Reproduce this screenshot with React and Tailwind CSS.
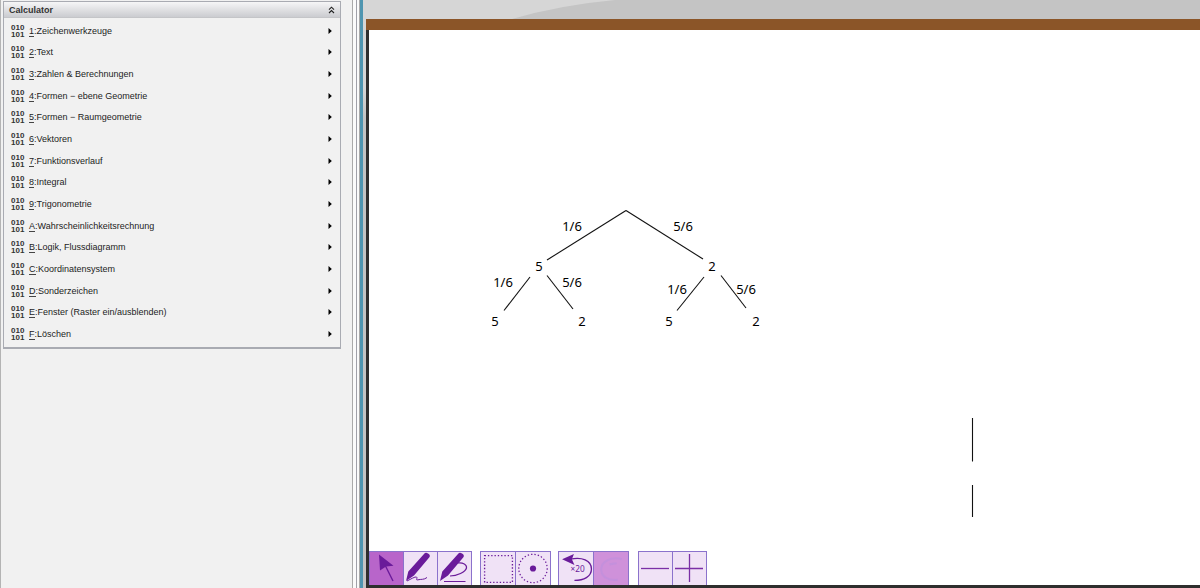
import React from "react";

const ITEMS = [
  ["1", "Zeichenwerkzeuge"],
  ["2", "Text"],
  ["3", "Zahlen & Berechnungen"],
  ["4", "Formen − ebene Geometrie"],
  ["5", "Formen − Raumgeometrie"],
  ["6", "Vektoren"],
  ["7", "Funktionsverlauf"],
  ["8", "Integral"],
  ["9", "Trigonometrie"],
  ["A", "Wahrscheinlichkeitsrechnung"],
  ["B", "Logik, Flussdiagramm"],
  ["C", "Koordinatensystem"],
  ["D", "Sonderzeichen"],
  ["E", "Fenster (Raster ein/ausblenden)"],
  ["F", "Löschen"],
];

function MenuItem({ shortcut, label }) {
  return (
    <li className="flex">
      <button type="button" className="flex w-full items-center pr-2 pl-[7px] text-left text-[9px] leading-[12px] text-[#1c1c1c]">
        <span aria-hidden="true" className="w-[18px] shrink-0 text-[8px] leading-[7px] font-bold text-[#333]">
          010
          <br />
          101
        </span>
        <span className="flex-1 whitespace-nowrap">
          <span className="border-b border-[#444]">{shortcut}</span>:{label}
        </span>
        <svg className="h-[6px] w-[4px]" viewBox="0 0 4 6" aria-hidden="true">
          <path d="M0.5 0 L3.8 3 L0.5 6Z" fill="#000" />
        </svg>
      </button>
    </li>
  );
}

function Sidebar() {
  return (
    <aside className="w-[352px] shrink-0 border-l border-[#b4b4b4] bg-[#f1f1f1] pt-px pl-[2px]">
      <section className="w-[338px] border border-b-2 border-[#a9abb2]">
        <header className="flex h-4 items-center justify-between border-b border-[#c4c5c8] bg-linear-to-b from-[#f6f6f7] to-[#cbccd0] pr-[5px] pl-[5px]">
          <h1 className="text-[9px] leading-[12px] font-bold text-[#333]">Calculator</h1>
          <button type="button" aria-label="Einklappen" className="flex">
            <svg className="h-[8px] w-[7px]" viewBox="0 0 7 8" fill="none" stroke="#222" strokeWidth="1.1">
              <path d="M1 3.6 L3.5 1.2 L6 3.6 M1 7 L3.5 4.6 L6 7" />
            </svg>
          </button>
        </header>
        <ul className="grid h-[329px] auto-rows-fr py-[2px]">
          {ITEMS.map(([k, l]) => (
            <MenuItem key={k} shortcut={k} label={l} />
          ))}
        </ul>
      </section>
    </aside>
  );
}

const EDGES = [
  [626, 210.5, 547, 260],
  [626, 210.5, 703, 259],
  [530, 277, 504, 310.5],
  [547, 275.5, 573, 309],
  [704, 277, 677, 310.5],
  [721, 275.5, 746, 308],
  [972.5, 418, 972.5, 461.5],
  [972.5, 485, 972.5, 517],
];

const LABELS = [
  [572, 231, "1/6"],
  [683, 231, "5/6"],
  [539, 271, "5"],
  [712, 271, "2"],
  [503, 287, "1/6"],
  [572, 287, "5/6"],
  [677, 294, "1/6"],
  [746, 294, "5/6"],
  [495, 326, "5"],
  [582, 326, "2"],
  [669, 326, "5"],
  [756, 326, "2"],
];

function ProbabilityTree() {
  return (
    <svg className="block h-[521px] w-[831px]" viewBox="369 30 831 521" role="img" aria-label="Baumdiagramm">
      <g stroke="#111" strokeWidth="1.1">
        {EDGES.map(([x1, y1, x2, y2], i) => (
          <line key={i} x1={x1} y1={y1} x2={x2} y2={y2} />
        ))}
      </g>
      <g className="font-['Noto_Sans',sans-serif] text-[13px]" textAnchor="middle" fill="#000">
        {LABELS.map(([x, y, t], i) => (
          <text key={i} x={x} y={y}>
            {t}
          </text>
        ))}
      </g>
    </svg>
  );
}

const PEN = <path d="M21 3 Q22.5 1 25 2.4 Q27.8 4 26.4 6.2 L11 24.5 L3 30 L5.3 20.5Z" fill="#6a1b9a" />;

const ICONS = {
  select: (
    <g>
      <path d="M16.5 15 L24 30" stroke="#6a1b9a" strokeWidth="1.4" />
      <path d="M10 3.5 L24.5 14.7 L17 15.6 L11 19.5Z" fill="#6a1b9a" />
    </g>
  ),
  pen: (
    <g>
      {PEN}
      <path d="M4 30 C8 28 12 25.5 13.5 26 C15 27 12 29.5 15 28.8 C18 28 21 29 24 26.5" fill="none" stroke="#6a1b9a" />
    </g>
  ),
  shapePen: (
    <g>
      {PEN}
      <path d="M21 12 C26 11.5 30 13.5 29.5 17 C28.5 21 20 25 13 25 M7 30.5 H28.5" fill="none" stroke="#6a1b9a" strokeWidth="1.2" />
    </g>
  ),
  marquee: <rect x="4.5" y="4.5" width="27" height="26" fill="none" stroke="#6a1b9a" strokeWidth="1.3" strokeDasharray="1.3 1.9" />,
  target: (
    <g>
      <circle cx="17.5" cy="17" r="13.8" fill="none" stroke="#6a1b9a" strokeWidth="1.2" strokeDasharray="1.3 2" />
      <circle cx="17.5" cy="17" r="3" fill="#6a1b9a" />
    </g>
  ),
  undo: (
    <g>
      <path d="M12 8 C23 5.5 32.5 9 32.5 17.5 C32.5 25 25 28.5 16 28.5" fill="none" stroke="#6a1b9a" strokeWidth="1.3" />
      <path d="M4 8 L15.5 3 L13.5 8 L16 13.5Z" fill="#6a1b9a" />
      <text x="19" y="20.5" textAnchor="middle" fontSize="8" fill="#6a1b9a" className="font-['Noto_Sans',sans-serif]">
        ×20
      </text>
    </g>
  ),
  redo: (
    <path d="M28 8 C18 5 8 10 8 18 C8 25 15 29 24 28 M16 13 L23 12" fill="none" stroke="#bd8fdd" strokeWidth="2" opacity="0.6" />
  ),
  minus: <path d="M3 17.5 H31" stroke="#7b2fa6" strokeWidth="1.3" />,
  plus: <path d="M3 17.5 H31 M17.5 3 V31" stroke="#7b2fa6" strokeWidth="1.3" />,
};

function Tool({ icon, label, tone = "bg-[#f0e2f6]", width = "w-[35px]" }) {
  return (
    <button type="button" aria-label={label} className={`h-[34px] overflow-hidden border border-b-0 border-[#8b72cc] ${width} ${tone}`}>
      <svg className="block h-[33px] w-full" viewBox="1 1 33 33" preserveAspectRatio="xMinYMin slice">
        {ICONS[icon]}
      </svg>
    </button>
  );
}

function Toolbar() {
  return (
    <div role="toolbar" aria-label="Werkzeuge" className="flex">
      <div className="mr-2 flex -space-x-px">
        <Tool icon="select" label="Auswählen" tone="bg-[#b865ca]" />
        <Tool icon="pen" label="Freihand" />
        <Tool icon="shapePen" label="Formen zeichnen" />
      </div>
      <div className="mr-[7px] flex -space-x-px">
        <Tool icon="marquee" label="Bereich auswählen" width="w-[36px]" />
        <Tool icon="target" label="Punkt" width="w-[36px]" />
      </div>
      <div className="mr-[9px] flex -space-x-px">
        <Tool icon="undo" label="Rückgängig" width="w-[36px]" />
        <Tool icon="redo" label="Wiederholen" tone="bg-[#cf91da]" width="w-[36px]" />
      </div>
      <div className="flex -space-x-px">
        <Tool icon="minus" label="Verkleinern" />
        <Tool icon="plus" label="Vergrößern" />
      </div>
    </div>
  );
}

export default function App() {
  return (
    <div className="flex min-h-screen overflow-hidden bg-[#f1f1f1] font-['Liberation_Sans',Arial,sans-serif]">
      <Sidebar />
      <div className="flex w-2 shrink-0 border-r border-l border-[#a9a9a9] bg-[#fafafa]">
        <div className="mr-[2px] ml-auto w-px bg-[#a0a0a8]" />
      </div>
      <main className="flex min-w-0 flex-1 flex-col border-l-[3px] border-[#4f95b0] bg-linear-to-b from-[#d6d6d6] from-15% to-[#c4c4c4] to-20% pl-[3px]">
        <svg className="h-[19px] w-full shrink-0" viewBox="366 0 834 19" preserveAspectRatio="xMinYMin slice" aria-hidden="true">
          <path d="M512 19 Q560 5 615 0 H1200 V19Z" fill="#c4c4c4" />
        </svg>
        <div className="flex flex-1 flex-col border-t-[11px] border-t-[#8b5528]">
          <div className="flex flex-1 flex-col justify-between overflow-hidden border-b-[3px] border-l-[3px] border-[#2e2e2e] bg-white">
            <ProbabilityTree />
            <Toolbar />
          </div>
        </div>
      </main>
    </div>
  );
}
